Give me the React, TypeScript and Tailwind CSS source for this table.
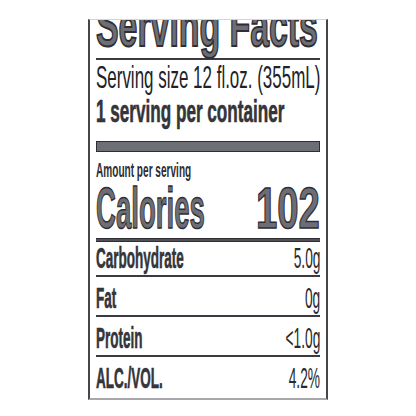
import React from "react";

const rows = [
  { label: "Carbohydrate", value: "5.0g", mt: "mt-[2px]" },
  { label: "Fat", value: "0g", mt: "mt-[7px]" },
  { label: "Protein", value: "<1.0g", mt: "mt-[7px]" },
  { label: "ALC./VOL.", value: "4.2%", mt: "mt-[7px]" },
];

export default function App() {
  return (
    <div className="w-[416px] h-[416px] bg-white pt-[19px] pl-[88px] font-['Liberation_Sans',sans-serif]">
      <div className="w-[240px] h-[381px] overflow-hidden border-x-2 border-x-[#45454b] border-t border-t-[#d4d4d4] border-b-2 border-b-[#a8a8ac] px-[6px]">
        {/* title, cut off at the top */}
        <div className="-mt-[24px] h-[60px] text-[60px] leading-none font-bold whitespace-nowrap text-[#6d6d75] [-webkit-text-stroke:2px_#2e2e33]">
          <span className="inline-block origin-left scale-x-[0.564]">Serving Facts</span>
        </div>
        <div className="mt-[2px] h-[2px] bg-[#3a3a40]" />

        <div className="mt-[1px] h-[32px] text-[32px] leading-none whitespace-nowrap text-[#222226]">
          <span className="inline-block origin-left scale-x-[0.53]">Serving size 12 fl.oz. (355mL)</span>
        </div>
        <div className="mt-[2px] h-[32px] text-[32px] leading-none font-bold whitespace-nowrap text-[#36363b] [-webkit-text-stroke:0.6px_#2a2a2e]">
          <span className="inline-block origin-left scale-x-[0.535]">1 serving per container</span>
        </div>

        <div className="mt-[14px] h-[11px] bg-[#6e6e76] border border-[#2e2e33]" />

        <div className="mt-[8px] h-[20px] text-[20px] leading-none font-bold whitespace-nowrap text-[#2e2e33]">
          <span className="inline-block origin-left scale-x-[0.504]">Amount per serving</span>
        </div>
        <div className="-mt-[1px] flex items-baseline h-[58px] text-[58px] leading-none font-bold whitespace-nowrap text-[#6d6d75] [-webkit-text-stroke:1.5px_#2e2e33]">
          <div className="flex-1 min-w-0">
            <span className="inline-block origin-left scale-x-[0.476]">Calories</span>
          </div>
          <span className="shrink-0 inline-block origin-right scale-x-[0.66]">102</span>
        </div>
        <div className="mt-[1px] h-[4px] bg-[#505056] border-y border-[#2e2e33]" />

        {rows.map((r, i) => (
          <div key={r.label}>
            <div className={`${r.mt} flex items-baseline h-[29px] text-[29px] leading-none whitespace-nowrap`}>
              <div className="flex-1 min-w-0 font-bold text-[#36363b] [-webkit-text-stroke:0.6px_#2a2a2e]">
                <span className="inline-block origin-left scale-x-[0.466]">{r.label}</span>
              </div>
              <span className="shrink-0 inline-block origin-right scale-x-[0.475] text-[#2a2a2e]">{r.value}</span>
            </div>
            {i < rows.length - 1 && <div className="mt-[2px] h-[2px] bg-[#3a3a40]" />}
          </div>
        ))}
      </div>
    </div>
  );
}
